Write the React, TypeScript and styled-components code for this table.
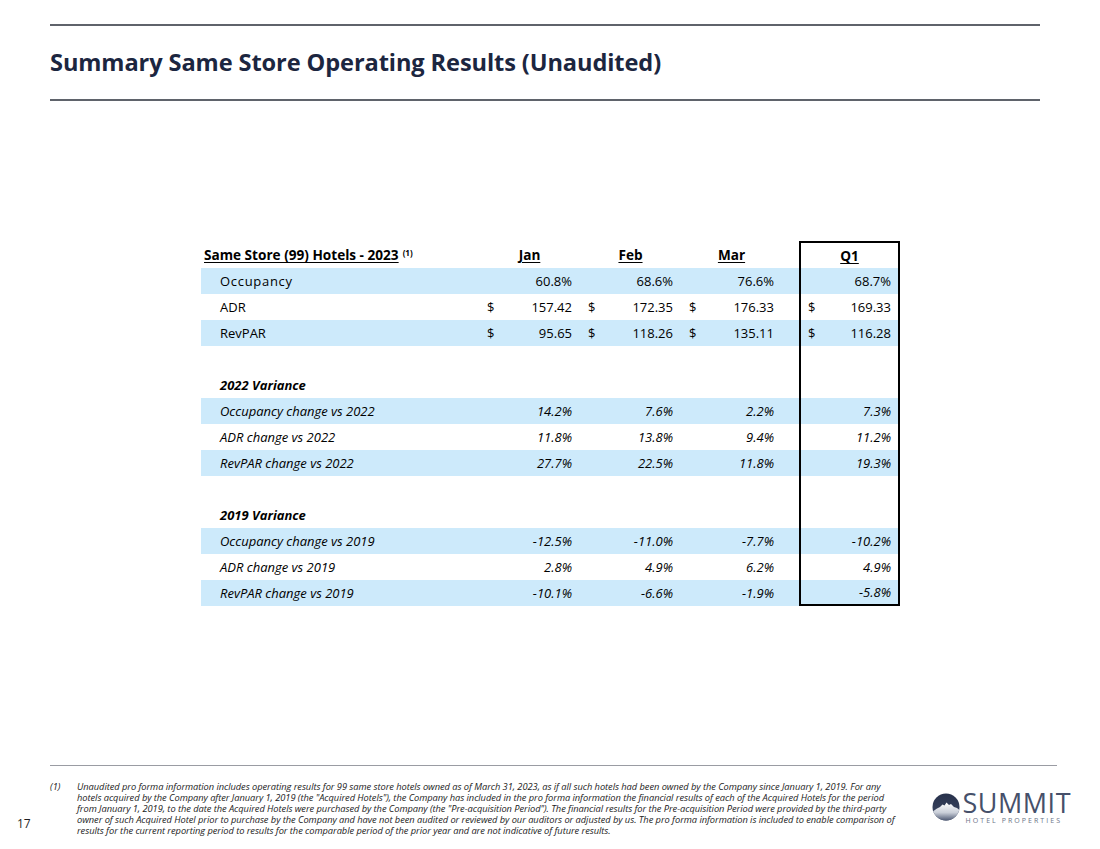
import React from 'react';
import styled, { createGlobalStyle } from 'styled-components';

const GlobalStyle = createGlobalStyle`
  html, body {
    margin: 0;
    padding: 0;
    background: #ffffff;
  }
  body {
    font-family: 'Open Sans', 'Noto Sans', sans-serif;
    color: #000000;
  }
`;

const Slide = styled.div`
  display: flex;
  flex-direction: column;
  width: 1100px;
  height: 849px;
  box-sizing: border-box;
  background: #ffffff;
  overflow: hidden;
`;

const Header = styled.header`
  display: flex;
  flex-direction: column;
  margin: 24px 60px 0 50px;
`;

const Rule = styled.div`
  height: 2px;
  background: #5f636b;
`;

const TitleBar = styled.div`
  display: flex;
  align-items: center;
  height: 73px;
`;

const Title = styled.h1`
  margin: 0;
  font-family: 'Open Sans', sans-serif;
  font-size: 23.6px;
  font-weight: 700;
  color: #1c2640;
  letter-spacing: -0.1px;
  position: relative;
  top: -1px;
`;

const Main = styled.main`
  flex: 1;
  padding: 140px 0 0 201px;
`;

const Table = styled.div`
  display: flex;
  flex-direction: column;
  width: 699px;
  font-size: 13px;
`;

const Row = styled.div<{ $shaded?: boolean; $head?: boolean }>`
  display: grid;
  grid-template-columns: 278px 101px 101px 101px 17px 101px;
  height: ${(p) => (p.$head ? '27px' : '26px')};
  background: ${(p) => (p.$shaded ? '#cdeafb' : 'transparent')};
`;

const Label = styled.div<{ $italic?: boolean; $bold?: boolean; $spaced?: boolean }>`
  display: flex;
  align-items: center;
  padding-left: 19px;
  font-style: ${(p) => (p.$italic ? 'italic' : 'normal')};
  font-weight: ${(p) => (p.$bold ? 700 : 400)};
  letter-spacing: ${(p) => (p.$spaced ? '0.7px' : '0')};
`;

const HeadLabel = styled.div`
  display: flex;
  align-items: center;
  padding-left: 3px;
  font-size: 13.6px;
  font-weight: 700;
  white-space: nowrap;

  u {
    text-underline-offset: 2px;
  }

  sup {
    font-size: 8px;
    margin-left: 4px;
    position: relative;
    top: -2px;
  }
`;

const HeadCell = styled.div`
  display: flex;
  align-items: center;
  justify-content: center;
  font-size: 13.6px;
  font-weight: 700;

  u {
    text-underline-offset: 2px;
  }
`;

const Cell = styled.div<{ $italic?: boolean }>`
  display: flex;
  align-items: center;
  justify-content: space-between;
  padding: 0 8px;
  font-style: ${(p) => (p.$italic ? 'italic' : 'normal')};
`;

const Value = styled.span`
  margin-left: auto;
`;

const BoxCell = styled(Cell)<{ $top?: boolean; $bottom?: boolean }>`
  box-sizing: border-box;
  padding: 0 7px;
  border-left: 2px solid #000000;
  border-right: 2px solid #000000;
  border-top: ${(p) => (p.$top ? '2px solid #000000' : 'none')};
  border-bottom: ${(p) => (p.$bottom ? '2px solid #000000' : 'none')};
  justify-content: ${(p) => (p.$top ? 'center' : 'space-between')};
  font-size: ${(p) => (p.$top ? '13.6px' : 'inherit')};
  font-weight: ${(p) => (p.$top ? 700 : 'inherit')};

  u {
    text-underline-offset: 2px;
  }
`;

const Footer = styled.footer`
  display: flex;
  flex-direction: column;
  height: 84px;
`;

const FootRule = styled.div`
  height: 1px;
  margin: 0 43px 0 50px;
  background: #9a9ca3;
`;

const FootRow = styled.div`
  display: flex;
  padding-top: 15px;
`;

const PageNumber = styled.div`
  width: 33px;
  padding: 36px 0 0 17px;
  font-size: 12px;
  line-height: 14px;
  color: #1f1f1f;
`;

const Marker = styled.div`
  width: 27px;
  font-size: 9.3px;
  line-height: 11px;
  font-style: italic;
  color: #222222;
`;

const Note = styled.div`
  display: flex;
  flex-direction: column;
  font-size: 9.3px;
  line-height: 11px;
  font-style: italic;
  color: #222222;
  white-space: nowrap;
  letter-spacing: -0.05px;
`;

const Logo = styled.div`
  display: flex;
  align-items: flex-start;
  gap: 3px;
  margin: 12px 29px 0 auto;
`;

const Wordmark = styled.div`
  display: flex;
  flex-direction: column;
  align-items: flex-start;
`;

const Brand = styled.div`
  font-family: 'Open Sans', sans-serif;
  font-size: 27px;
  line-height: 26px;
  height: 26px;
  font-weight: 400;
  color: #46506a;
  letter-spacing: 0.5px;
  margin-top: -3px;
`;

const Tagline = styled.div`
  font-family: 'Open Sans', sans-serif;
  font-size: 7px;
  line-height: 9px;
  letter-spacing: 2.05px;
  color: #6b7387;
  padding-left: 3px;
  white-space: nowrap;
`;

type DataRow = {
  label: string;
  values: string[];
  dollar?: boolean;
  shaded?: boolean;
  italic?: boolean;
  spaced?: boolean;
};

type Block =
  | { kind: 'data'; row: DataRow }
  | { kind: 'blank' }
  | { kind: 'section'; label: string };

const blocks: Block[] = [
  { kind: 'data', row: { label: 'Occupancy', values: ['60.8%', '68.6%', '76.6%', '68.7%'], shaded: true, spaced: true } },
  { kind: 'data', row: { label: 'ADR', values: ['157.42', '172.35', '176.33', '169.33'], dollar: true } },
  { kind: 'data', row: { label: 'RevPAR', values: ['95.65', '118.26', '135.11', '116.28'], dollar: true, shaded: true } },
  { kind: 'blank' },
  { kind: 'section', label: '2022 Variance' },
  { kind: 'data', row: { label: 'Occupancy change vs 2022', values: ['14.2%', '7.6%', '2.2%', '7.3%'], shaded: true, italic: true } },
  { kind: 'data', row: { label: 'ADR change vs 2022', values: ['11.8%', '13.8%', '9.4%', '11.2%'], italic: true } },
  { kind: 'data', row: { label: 'RevPAR change vs 2022', values: ['27.7%', '22.5%', '11.8%', '19.3%'], shaded: true, italic: true } },
  { kind: 'blank' },
  { kind: 'section', label: '2019 Variance' },
  { kind: 'data', row: { label: 'Occupancy change vs 2019', values: ['-12.5%', '-11.0%', '-7.7%', '-10.2%'], shaded: true, italic: true } },
  { kind: 'data', row: { label: 'ADR change vs 2019', values: ['2.8%', '4.9%', '6.2%', '4.9%'], italic: true } },
  { kind: 'data', row: { label: 'RevPAR change vs 2019', values: ['-10.1%', '-6.6%', '-1.9%', '-5.8%'], shaded: true, italic: true } },
];

const noteLines = [
  'Unaudited pro forma information includes operating results for 99 same store hotels owned as of March 31, 2023, as if all such hotels had been owned by the Company since January 1, 2019. For any',
  'hotels acquired by the Company after January 1, 2019 (the "Acquired Hotels"), the Company has included in the pro forma information the financial results of each of the Acquired Hotels for the period',
  'from January 1, 2019, to the date the Acquired Hotels were purchased by the Company (the "Pre-acquisition Period"). The financial results for the Pre-acquisition Period were provided by the third-party',
  'owner of such Acquired Hotel prior to purchase by the Company and have not been audited or reviewed by our auditors or adjusted by us. The pro forma information is included to enable comparison of',
  'results for the current reporting period to results for the comparable period of the prior year and are not indicative of future results.',
];

const SummitMark = () => (
  <svg width="28" height="28" viewBox="0 0 28 28">
    <defs>
      <clipPath id="summit-clip">
        <circle cx="14" cy="14" r="13.5" />
      </clipPath>
      <linearGradient id="summit-sky" x1="0" y1="0" x2="0" y2="1">
        <stop offset="0" stopColor="#27314b" />
        <stop offset="1" stopColor="#3d4864" />
      </linearGradient>
      <linearGradient id="summit-snow" x1="0" y1="0" x2="0" y2="1">
        <stop offset="0" stopColor="#ffffff" />
        <stop offset="0.55" stopColor="#c9ced8" />
        <stop offset="1" stopColor="#46516c" />
      </linearGradient>
    </defs>
    <g clipPath="url(#summit-clip)">
      <rect width="28" height="28" fill="url(#summit-sky)" />
      <path
        d="M0 19 L5 15.5 L8 14 L10.5 11.5 L12.5 12.5 L14.5 9.5 L17 12 L19 11 L22 14 L25 15 L28 17.5 L28 28 L0 28 Z"
        fill="url(#summit-snow)"
      />
    </g>
  </svg>
);

const renderValues = (row: DataRow) =>
  row.values.slice(0, 3).map((v, i) => (
    <Cell key={i} $italic={row.italic}>
      {row.dollar && <span>$</span>}
      <Value>{v}</Value>
    </Cell>
  ));

export default function App() {
  const last = blocks.length - 1;

  return (
    <>
      <GlobalStyle />
      <Slide>
        <Header>
          <Rule />
          <TitleBar>
            <Title>Summary Same Store Operating Results (Unaudited)</Title>
          </TitleBar>
          <Rule />
        </Header>

        <Main>
          <Table>
            <Row $head>
              <HeadLabel>
                <u>Same Store (99) Hotels - 2023</u>
                <sup>(1)</sup>
              </HeadLabel>
              <HeadCell>
                <u>Jan</u>
              </HeadCell>
              <HeadCell>
                <u>Feb</u>
              </HeadCell>
              <HeadCell>
                <u>Mar</u>
              </HeadCell>
              <div />
              <BoxCell $top>
                <u>Q1</u>
              </BoxCell>
            </Row>

            {blocks.map((b, idx) => {
              const isLast = idx === last;
              if (b.kind === 'blank') {
                return (
                  <Row key={idx}>
                    <div />
                    <div />
                    <div />
                    <div />
                    <div />
                    <BoxCell $bottom={isLast} />
                  </Row>
                );
              }
              if (b.kind === 'section') {
                return (
                  <Row key={idx}>
                    <Label $italic $bold>
                      {b.label}
                    </Label>
                    <div />
                    <div />
                    <div />
                    <div />
                    <BoxCell $bottom={isLast} />
                  </Row>
                );
              }
              const row = b.row;
              return (
                <Row key={idx} $shaded={row.shaded}>
                  <Label $italic={row.italic} $spaced={row.spaced}>
                    {row.label}
                  </Label>
                  {renderValues(row)}
                  <div />
                  <BoxCell $italic={row.italic} $bottom={isLast}>
                    {row.dollar && <span>$</span>}
                    <Value>{row.values[3]}</Value>
                  </BoxCell>
                </Row>
              );
            })}
          </Table>
        </Main>

        <Footer>
          <FootRule />
          <FootRow>
            <PageNumber>17</PageNumber>
            <Marker>(1)</Marker>
            <Note>
              {noteLines.map((line) => (
                <span key={line}>{line}</span>
              ))}
            </Note>
            <Logo>
              <SummitMark />
              <Wordmark>
                <Brand>SUMMIT</Brand>
                <Tagline>HOTEL PROPERTIES</Tagline>
              </Wordmark>
            </Logo>
          </FootRow>
        </Footer>
      </Slide>
    </>
  );
}
